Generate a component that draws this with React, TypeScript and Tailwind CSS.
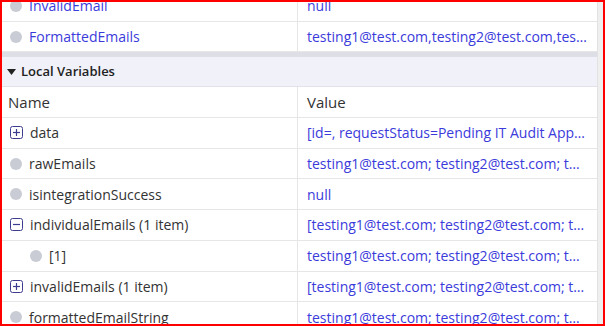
import React from "react";

const font = { fontFamily: '"Open Sans", "Noto Sans", sans-serif' };

function Dot({ indent = false }: { indent?: boolean }) {
  return <span className={`inline-block w-[12px] h-[12px] rounded-full bg-[#c9ccd4] shrink-0 ${indent ? "ml-[20px]" : ""}`} />;
}

function BoxIcon({ minus = false }: { minus?: boolean }) {
  return (
    <svg width="13" height="13" viewBox="0 0 13 13" className="shrink-0">
      <rect x="0.5" y="0.5" width="12" height="12" rx="2" fill="none" stroke="#3d3d8f" strokeWidth="1" />
      <line x1="3" y1="6.5" x2="10" y2="6.5" stroke="#3d3d8f" strokeWidth="1.2" />
      {!minus && <line x1="6.5" y1="3" x2="6.5" y2="10" stroke="#3d3d8f" strokeWidth="1.2" />}
    </svg>
  );
}

type Row = { name: string; value: string; icon: "dot" | "plus" | "minus" | "sub"; blueName?: boolean };

function DataRow({ r }: { r: Row }) {
  return (
    <div className="flex h-[30.7px] border-b border-[#e6e6e6] items-center text-[14px]">
      <div className="w-[296px] h-full flex items-center gap-[7px] pl-[8px] border-r border-[#e6e6e6] shrink-0">
        {r.icon === "dot" && <Dot />}
        {r.icon === "sub" && <Dot indent />}
        {r.icon === "plus" && <BoxIcon />}
        {r.icon === "minus" && <BoxIcon minus />}
        <span className={`${r.blueName ? "text-[#3b3bdb]" : "text-[#333333]"} whitespace-nowrap`}>{r.name}</span>
      </div>
      <div className="flex-1 min-w-0 pl-[9px] pr-[10px] truncate text-[#3b3bdb]">{r.value}</div>
    </div>
  );
}

export default function App() {
  const top: Row[] = [
    { name: "InvalidEmail", value: "null", icon: "dot", blueName: true },
    { name: "FormattedEmails", value: "testing1@test.com,testing2@test.com,testing3@test.com", icon: "dot", blueName: true },
  ];
  const locals: Row[] = [
    { name: "data", value: "[id=, requestStatus=Pending IT Audit Approval]", icon: "plus" },
    { name: "rawEmails", value: "testing1@test.com; testing2@test.com; testing3@test.com", icon: "dot" },
    { name: "isintegrationSuccess", value: "null", icon: "dot" },
    { name: "individualEmails (1 item)", value: "[testing1@test.com; testing2@test.com; testing3@test.com]", icon: "minus" },
    { name: "[1]", value: "testing1@test.com; testing2@test.com; testing3@test.com", icon: "sub" },
    { name: "invalidEmails (1 item)", value: "[testing1@test.com; testing2@test.com; testing3@test.com]", icon: "plus" },
    { name: "formattedEmailString", value: "testing1@test.com; testing2@test.com; testing3@test.com", icon: "dot" },
  ];
  return (
    <div style={font} className="w-[605px] h-[326px] border-2 border-[#ff0000] bg-white overflow-hidden flex">
      <div className="w-[596px] h-full overflow-hidden border-r border-[#e2e2e2]">
        <div className="-mt-[11px]">
          {top.map((r) => (
            <DataRow key={r.name} r={r} />
          ))}
          <div className="h-[5px] bg-[#dedee6]" />
          <div className="h-[30px] bg-[#f1f1f9] border-b border-[#e2e2e8] flex items-center pl-[5px] gap-[5px]">
            <svg width="9" height="6" viewBox="0 0 9 6">
              <polygon points="0,0 9,0 4.5,6" fill="#222" />
            </svg>
            <span className="text-[13px] font-semibold text-[#222]">Local Variables</span>
          </div>
          <div className="flex h-[30.7px] border-b border-[#e6e6e6] items-center text-[15px] text-[#333]">
            <div className="w-[296px] h-full flex items-center pl-[6px] border-r border-[#e6e6e6] shrink-0">Name</div>
            <div className="pl-[9px]">Value</div>
          </div>
          {locals.map((r) => (
            <DataRow key={r.name} r={r} />
          ))}
        </div>
      </div>
      <div className="flex-1 bg-[#efefef]" />
    </div>
  );
}
